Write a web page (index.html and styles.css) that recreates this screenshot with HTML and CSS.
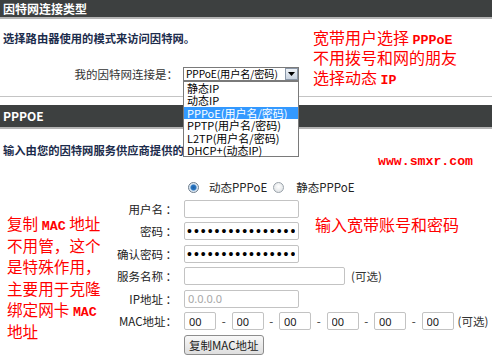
FILE: index.html
```html
<!DOCTYPE html>
<html lang="zh-CN">
<head>
<meta charset="utf-8">
<title>因特网连接类型</title>
<link rel="stylesheet" href="styles.css">
</head>
<body>
<div class="page">
  <div class="hdr">因特网连接类型</div>
  <p class="intro">选择路由器使用的模式来访问因特网。</p>
  <div class="conn-row">
    <span class="conn-label">我的因特网连接是：</span>
    <div class="select">
      <span class="select-text">PPPoE(用户名/密码)</span>
      <span class="select-btn"><svg width="7" height="4" viewBox="0 0 7 4"><path d="M0 0H7L3.5 4Z" fill="#000"/></svg></span>
      <ul class="options">
        <li>静态IP</li>
        <li>动态IP</li>
        <li class="active">PPPoE(用户名/密码)</li>
        <li>PPTP(用户名/密码)</li>
        <li>L2TP(用户名/密码)</li>
        <li>DHCP+(动态IP)</li>
      </ul>
    </div>
  </div>
  <div class="sep"></div>
  <div class="hdr hdr2">PPPOE</div>
  <p class="intro intro2">输入由您的因特网服务供应商提供的信息。</p>

  <div class="form">
    <span></span>
    <div class="radios">
      <span class="radio checked"></span><span class="radio-label rl1">动态PPPoE</span>
      <span class="radio"></span><span class="radio-label rl2">静态PPPoE</span>
    </div>

    <label class="lbl">用户名 ：</label>
    <div class="field"><input class="inp" type="text" value=""></div>

    <label class="lbl">密码 ：</label>
    <div class="field"><input class="inp inp-pw" type="password" value="abcdefghijklmnopqrstu"></div>

    <label class="lbl">确认密码 ：</label>
    <div class="field"><input class="inp inp-pw" type="password" value="abcdefghijklmnopqrstu"></div>

    <label class="lbl">服务名称 ：</label>
    <div class="field"><input class="inp inp-wide" type="text" value=""><span class="opt">(可选)</span></div>

    <label class="lbl">IP地址 ：</label>
    <div class="field"><input class="inp" type="text" placeholder="0.0.0.0"></div>

    <label class="lbl">MAC地址：</label>
    <div class="field mac">
      <input class="inp inp-mac" type="text" value="00"><span class="dash">-</span>
      <input class="inp inp-mac" type="text" value="00"><span class="dash">-</span>
      <input class="inp inp-mac" type="text" value="00"><span class="dash">-</span>
      <input class="inp inp-mac" type="text" value="00"><span class="dash">-</span>
      <input class="inp inp-mac" type="text" value="00"><span class="dash">-</span>
      <input class="inp inp-mac" type="text" value="00"><span class="opt opt-mac">(可选)</span>
    </div>

    <span></span>
    <div class="field field-btn"><button class="btn" type="button">复制MAC地址</button></div>
  </div>

  <div class="note note-top">宽带用户选择 <span class="mono">PPPoE</span><br>不用拨号和网的朋友<br>选择动态 <span class="mono">IP</span></div>
  <div class="note note-mid">输入宽带账号和密码</div>
  <div class="note note-left">复制 <span class="mono">MAC</span> 地址<br>不用管，这个<br>是特殊作用，<br>主要用于克隆<br>绑定网卡 <span class="mono">MAC</span><br>地址</div>
  <div class="watermark">www.smxr.com</div>
</div>
</body>
</html>
```

FILE: styles.css
```css
* { box-sizing: border-box; }
html, body { margin: 0; padding: 0; background: #fff; }
body { font-family: "Noto Sans CJK SC", "Noto Sans", sans-serif; font-size: 11.5px; color: #333; }

.page { position: relative; width: 492px; height: 359px; overflow: hidden; }

.hdr {
  height: 19px;
  background: #3d4040;
  border-bottom: 2px solid #b4b4b4;
  color: #fff;
  font-weight: bold;
  font-size: 12px;
  line-height: 17px;
  padding-left: 3px;
}
.hdr2 { height: 24px; line-height: 22px; margin-top: 8px; }

.intro {
  margin: 12px 0 0 0;
  padding-left: 3px;
  font-size: 11.3px;
  font-weight: bold;
  color: #1c2c4c;
  line-height: 14px;
  white-space: nowrap;
}
.intro2 { margin-top: 14px; }

.conn-row { display: flex; align-items: center; margin-top: 22px; height: 14px; }
.conn-label { width: 183px; text-align: right; padding-right: 5px; white-space: nowrap; }

.select {
  position: relative;
  width: 116px;
  height: 14px;
  border: 1px solid #7a7a7a;
  background: #fff;
  display: flex;
  align-items: center;
}
.select-text { flex: none; width: 101px; padding-left: 2px; font-size: 10.2px; line-height: 12px; letter-spacing: -0.1px; white-space: nowrap; color: #000; }
.select-btn {
  flex: none;
  width: 13px; height: 12px;
  background: linear-gradient(#eef2f7, #c9d3e0);
  border: 1px solid #8a97a8;
  display: flex; align-items: center; justify-content: center;
}
.options {
  position: absolute;
  left: -1px; top: 13px;
  width: 116px;
  margin: 0; padding: 0;
  list-style: none;
  background: #fff;
  border: 1px solid #7a7a7a;
  z-index: 5;
}
.options li {
  height: 12.4px;
  line-height: 12.4px;
  padding-left: 3px;
  font-size: 11px;
  color: #000;
  white-space: nowrap;
}
.options li.active { background: #3399ff; color: #fff; }

.sep { height: 1px; background: #c4c4c4; margin-top: 15px; }

.form {
  display: grid;
  grid-template-columns: 184px 1fr;
  grid-template-rows: 16px repeat(6, 18px) 20px;
  row-gap: 4.5px;
  margin-top: 22px;
  align-items: center;
}
.lbl { text-align: right; padding-right: 7px; white-space: nowrap; color: #222; }

.radios { display: flex; align-items: center; padding-left: 4px; }
.radio {
  flex: none;
  width: 11px; height: 11px; border-radius: 50%;
  border: 1px solid #9aa2aa;
  background: radial-gradient(circle at 50% 40%, #ffffff, #d8dcdf);
}
.radio.checked {
  border-color: #6c7c8c;
  background: radial-gradient(circle at 50% 50%, #1b5fa6 0, #2c77c2 2.5px, #cfe0f0 3.5px, #eef3f8 5px);
}
.radio-label { color: #222; white-space: nowrap; }
.rl1 { margin: 0 6px 0 10px; }
.rl2 { margin: 0 0 0 12px; }

.field { display: flex; align-items: center; }
.inp {
  flex: none;
  width: 115px;
  height: 18px;
  border: 1px solid #c3c3c3;
  border-radius: 2px;
  padding: 0 3px;
  font-family: "Noto Sans", sans-serif;
  font-size: 11px;
  color: #222;
  background: #fff;
  outline: none;
}
.inp-pw { font-family: "Liberation Sans", sans-serif; font-size: 14px; letter-spacing: 2px; padding-left: 2px; color: #000; }
.inp::placeholder { color: #a8a8a8; }
.inp-wide { width: 161px; }
.opt { margin-left: 6px; color: #333; white-space: nowrap; }
.inp-mac { width: 32px; padding-left: 4px; }
.dash { width: 15.5px; text-align: center; flex: none; }
.opt-mac { margin-left: 4px; }

.field-btn { align-self: start; margin-top: 0; }
.btn {
  height: 20px;
  padding: 0 4px;
  border: 1px solid #8d8d8d;
  border-radius: 3px;
  background: linear-gradient(#f8f8f8, #dedede);
  font-family: "Noto Sans CJK SC", sans-serif;
  font-size: 11.5px;
  line-height: 18px;
  color: #222;
}

.note {
  position: absolute;
  color: #ff0000;
  font-family: "Noto Sans CJK SC", sans-serif;
  font-size: 16px;
  white-space: nowrap;
}
.note-top { left: 313px; top: 27px; line-height: 20px; }
.note-mid { left: 315px; top: 214px; line-height: 20px; }
.note-left { left: 7px; top: 213px; line-height: 21.5px; font-size: 15.6px; }
.mono { font-family: "Liberation Mono", monospace; font-weight: bold; font-size: 13.3px; line-height: 1; }
.watermark {
  position: absolute;
  left: 378px; top: 154px;
  color: #ff0000;
  font-family: "Liberation Mono", monospace;
  font-weight: bold;
  font-size: 13.2px;
  line-height: 16px;
}
```
